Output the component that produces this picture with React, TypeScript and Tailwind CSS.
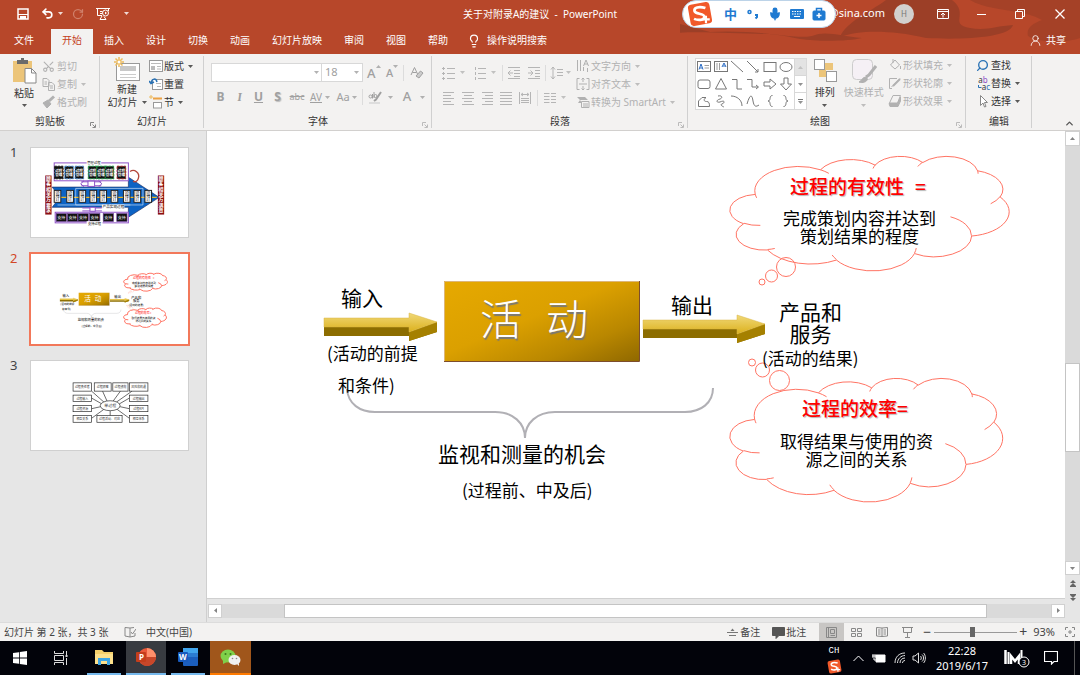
import type { ReactNode } from 'react';
import { Undo2, RotateCw, Scissors, Lightbulb, Search, ChevronUp, Mic, UserRound } from 'lucide-react';

type Arc = [number, number, number, number];

// Cloud outline, drawn on a 43200 x 43200 grid as elliptical arcs: [rx, ry, start, sweep]
const cloudOutline: Arc[] = [
  [6753, 9190, -11429249, 7426832],
  [5333, 7267, -8646143, 5396714],
  [4365, 5945, -8748475, 5983381],
  [4857, 6595, -7859164, 7034504],
  [5333, 7273, -4722533, 6541615],
  [6775, 9220, -2776035, 7816140],
  [5785, 7867, 37501, 6842000],
  [6752, 9215, 1347096, 6910353],
  [7720, 10543, 3974558, 4542661],
  [4360, 5918, -16496525, 8804134],
  [4345, 5945, -14809710, 9151131],
];

const cloudDetails: { from: [number, number]; arc: Arc }[] = [
  { from: [4693, 26177], arc: [4345, 5945, 5204520, 1585770] },
  { from: [6928, 34899], arc: [4360, 5918, 4416628, 686848] },
  { from: [16478, 39090], arc: [6752, 9215, 8257449, 844866] },
  { from: [28827, 34751], arc: [6752, 9215, 387196, 959901] },
  { from: [34129, 22954], arc: [5785, 7867, -4217541, 4255042] },
  { from: [41798, 15354], arc: [5333, 7273, 1819082, 1665090] },
  { from: [38324, 5426], arc: [4857, 6595, -824660, 891534] },
  { from: [29078, 3952], arc: [4857, 6595, -8950887, 1091722] },
  { from: [22141, 4720], arc: [4365, 5945, -9809656, 1061181] },
  { from: [14000, 5192], arc: [6753, 9190, -4002417, 739161] },
  { from: [4127, 15789], arc: [6753, 9190, 9459261, 711490] },
];

function arcPath(from: [number, number], arcs: Arc[]) {
  let [x, y] = from;
  let d = `M${x} ${y}`;
  arcs.forEach(([rx, ry, start, sweep]) => {
    const param = (units: number) => {
      const a = (units / 60000) * (Math.PI / 180);
      return Math.atan2(rx * Math.sin(a), ry * Math.cos(a));
    };
    const t0 = param(start);
    const t1 = param(start + sweep);
    const cx = x - rx * Math.cos(t0);
    const cy = y - ry * Math.sin(t0);
    x = cx + rx * Math.cos(t1);
    y = cy + ry * Math.sin(t1);
    d += ` A${rx} ${ry} 0 ${sweep > 10800000 ? 1 : 0} 1 ${Math.round(x)} ${Math.round(y)}`;
  });
  return d;
}

const cloudPath = [
  arcPath([3900, 14370], cloudOutline) + 'Z',
  ...cloudDetails.map((item) => arcPath(item.from, [item.arc])),
].join(' ');

type Label = { lines: string[]; x: number; y: number; size: number; leading: number; kind?: 'title' | 'box' };

const slideLabels: Label[] = [
  { lines: ['输入'], x: 134, y: 156, size: 21, leading: 21 },
  { lines: ['(活动的前提'], x: 120, y: 213, size: 17, leading: 17 },
  { lines: ['和条件)'], x: 131, y: 245, size: 17, leading: 17 },
  { lines: ['活'], x: 273, y: 165, size: 42, leading: 42, kind: 'box' },
  { lines: ['动'], x: 339, y: 165, size: 42, leading: 42, kind: 'box' },
  { lines: ['输出'], x: 464, y: 163, size: 21, leading: 21 },
  { lines: ['产品和', '服务'], x: 572, y: 169, size: 21, leading: 22 },
  { lines: ['(活动的结果)'], x: 555, y: 218, size: 17, leading: 17 },
  { lines: ['监视和测量的机会'], x: 231, y: 312, size: 21, leading: 21 },
  { lines: ['(过程前、中及后)'], x: 255, y: 350, size: 17, leading: 17 },
  { lines: ['过程的有效性'], x: 583, y: 45, size: 19, leading: 19, kind: 'title' },
  { lines: ['='], x: 708, y: 45, size: 19, leading: 19, kind: 'title' },
  { lines: ['完成策划内容并达到', '策划结果的程度'], x: 576, y: 78, size: 17, leading: 18 },
  { lines: ['过程的效率='], x: 595, y: 267, size: 19, leading: 19, kind: 'title' },
  { lines: ['取得结果与使用的资', '源之间的关系'], x: 573, y: 301, size: 17, leading: 18 },
];

const labelStyles = {
  plain: 'text-black',
  title: 'font-medium text-[#ff0000] [text-shadow:1px_1px_1px_#b5b5b5]',
  box: 'font-light text-white [text-shadow:1px_2px_1px_#777]',
};

function BlockArrow({ x, y, shaft }: { x: number; y: number; shaft: number }) {
  return (
    <g transform={`translate(${x} ${y})`}>
      <path d={`M0 14H${shaft}V19L${shaft + 28} 9V19L${shaft} 28V23H0Z`} fill="#8c6d00" />
      <path d={`M${shaft} 19L${shaft + 28} 9V19L${shaft} 28Z`} fill="#a58000" />
      <path d={`M0 5H${shaft}V0L${shaft + 28} 9L${shaft} 19V14H0Z`} fill="url(#gold)" stroke="#d8b545" strokeWidth="0.5" />
    </g>
  );
}

function SlideShapes() {
  return (
    <>
      <defs>
        <linearGradient id="gold" x1="0" y1="0" x2="0" y2="1">
          <stop offset="0" stopColor="#f0d878" />
          <stop offset="1" stopColor="#dcb11c" />
        </linearGradient>
        <linearGradient id="box" x1="0" y1="0" x2="1" y2="1">
          <stop offset="0" stopColor="#e6a900" />
          <stop offset="0.45" stopColor="#dba000" />
          <stop offset="0.75" stopColor="#b98700" />
          <stop offset="1" stopColor="#8f6800" />
        </linearGradient>
      </defs>
      <rect x="237" y="150" width="195" height="81" fill="url(#box)" />
      <path d="M237.500 231V150.500H432" fill="none" stroke="#dcb678" />
      <path d="M237 230.500H432.500V150" fill="none" stroke="#7d4d2c" />
      <BlockArrow x={117} y={182} shaft={85} />
      <BlockArrow x={436} y={184} shaft={94} />
      <path
        d="M140 258C141 273 153 281 168 281H288C306 281 318 292 318 307C318 292 330 281 348 281H478C494 281 506 272 506 257"
        fill="none"
        stroke="#b1b0b5"
        strokeWidth="2"
      />
      <g fill="none" stroke="#ff7464">
        <path d={cloudPath} transform="translate(523 25) scale(0.00646 0.00265)" vectorEffect="non-scaling-stroke" />
        <circle cx="579" cy="136" r="9.500" />
        <circle cx="564.500" cy="145" r="6" />
        <circle cx="555" cy="151" r="3" />
        <path d={cloudPath} transform="translate(523 247) scale(0.00631 0.00286)" vectorEffect="non-scaling-stroke" />
        <circle cx="572.500" cy="249.500" r="10" />
        <circle cx="555.500" cy="239" r="7" />
        <circle cx="545" cy="231.500" r="3.500" />
      </g>
    </>
  );
}

// First thumbnail: process map
function ProcessMapThumb() {
  const top = [71, 102, 133, 173, 199, 224, 260];
  const topStroke = ['#222', '#4d8fd6', '#4d8fd6', '#1d9a48', '#1d9a48', '#1d9a48', '#a32020'];
  const middle = [70, 108, 145, 178, 208, 242, 279, 311, 344];
  const bottom = [76, 110, 142, 177, 218, 259];
  return (
    <svg viewBox="0 0 474 270" className="block w-full" fontFamily="Noto Sans CJK SC">
      <path d="M64 118H294V88L387 149L294 209V179H64L87 149Z" fill="#0c63c4" stroke="#1c2f66" strokeWidth="2" />
      <rect x="70" y="45" width="224" height="54" fill="#fff" stroke="#8d50c6" strokeWidth="3" />
      <rect x="73" y="194" width="221" height="32" fill="#fff" stroke="#8d50c6" strokeWidth="3" />
      {top.map((x, i) => (
        <g key={x}>
          <rect x={x} y="55" width="26" height="38" fill="#111" stroke={topStroke[i]} strokeWidth="3" strokeDasharray="7 3" />
          <text x={x + 2} y="71" fontSize="11" fontWeight="700" fill="#fff">过程</text>
          <text x={x + 2} y="86" fontSize="11" fontWeight="700" fill="#fff">管理</text>
        </g>
      ))}
      {bottom.map((x) => (
        <g key={x}>
          <rect x={x} y="198" width="31" height="24" fill="#111" stroke="#6b3d99" strokeWidth="2" />
          <text x={x + 3} y="215" fontSize="12" fill="#fff">支持</text>
        </g>
      ))}
      <path d="M82 149H380" stroke="#e5b62b" strokeWidth="4" />
      <path d="M135 122V172H338V122ZM80 172H300" fill="none" stroke="#cfe2f7" strokeWidth="2" />
      {middle.map((x) => (
        <g key={x}>
          <rect x={x} y="128" width="20" height="36" fill="#fff" stroke="#222" strokeWidth="3" />
          <text x={x + 3} y="143" fontSize="14">设</text>
          <text x={x + 3} y="158" fontSize="14">计</text>
        </g>
      ))}
      <g fill="none" stroke="#8d50c6" strokeWidth="3">
        <path d="M152 102H212M152 114H212M160 99L150 108L160 117M204 99L214 108L204 117M155 181H214M155 190H214" />
        <rect x="172" y="100" width="20" height="16" fill="#fff" />
        <rect x="178" y="179" width="16" height="12" fill="#fff" />
      </g>
      <path d="M299 71C312 62 330 75 324 92C322 99 316 104 308 101" fill="none" stroke="#b3473b" strokeWidth="4" />
      <rect x="168" y="38" width="44" height="13" fill="#fff" />
      <text x="170" y="49" fontSize="10">管理过程</text>
      <rect x="214" y="171" width="68" height="14" fill="#fff" />
      <text x="216" y="182" fontSize="11">产品实现过程</text>
      <rect x="168" y="221" width="48" height="13" fill="#fff" />
      <text x="172" y="232" fontSize="10">支持过程</text>
      {[43, 383].map((x) => (
        <g key={x}>
          <rect x={x} y="83" width="19" height="118" fill="#8d0f12" />
          {(x === 43 ? '顾客相关方要求' : '顾客相关方满意').split('').map((char, i) => (
            <text key={i} x={x + 2} y={97 + i * 16} fontSize="15" fontWeight="700" fill="#fff">{char}</text>
          ))}
        </g>
      ))}
    </svg>
  );
}

function ActivityThumb() {
  return (
    <svg viewBox="-67 -97 1000 570" className="block w-full" fontFamily="Noto Sans CJK SC">
      <SlideShapes />
      {slideLabels.map((label) => {
        const width = label.lines[0].length * label.size;
        return label.lines.map((line, i) => (
          <text
            key={line + label.x}
            x={label.x + (i ? (width - line.length * label.size) / 2 : 0)}
            y={label.y + label.leading * i + label.size * 0.94}
            fontSize={label.size}
            fill={label.kind === 'title' ? '#ff0000' : label.kind === 'box' ? '#fff' : '#000'}
          >
            {line}
          </text>
        ));
      })}
    </svg>
  );
}

const mapBoxes = [
  { x: 127, y: 66, w: 56, h: 25, text: '过程责任者' },
  { x: 191, y: 66, w: 51, h: 25, text: '过程顾客' },
  { x: 247, y: 66, w: 46, h: 25, text: '过程绩效' },
  { x: 297, y: 66, w: 56, h: 25, text: '风险和机遇' },
  { x: 127, y: 103, w: 56, h: 19, text: '过程输入' },
  { x: 127, y: 134, w: 56, h: 19, text: '过程资源' },
  { x: 127, y: 165, w: 56, h: 20, text: '相互关系' },
  { x: 297, y: 103, w: 56, h: 19, text: '过程输出' },
  { x: 297, y: 134, w: 56, h: 19, text: '过程KPI' },
  { x: 297, y: 165, w: 56, h: 20, text: '相互体系' },
  { x: 199, y: 165, w: 76, h: 20, text: '过程活动、对应' },
];

function MindMapThumb() {
  return (
    <svg viewBox="0 0 474 270" className="block w-full" fontFamily="Noto Sans CJK SC">
      <g fill="none" stroke="#222" strokeWidth="2">
        <path d="M183 91L220 124M216 91L230 122M270 91L248 121M305 91L258 124M183 112L213 129M183 144L210 138M183 173L220 146M297 112L266 130M297 144L269 138M297 173L260 146M239 150V165" />
        <ellipse cx="239" cy="135" rx="30" ry="15" fill="#fff" />
        {mapBoxes.map((box) => (
          <rect key={box.text} x={box.x} y={box.y} width={box.w} height={box.h} fill="#fff" />
        ))}
      </g>
      <g textAnchor="middle" fontSize="9" fill="#333">
        {mapBoxes.map((box) => (
          <text key={box.text} x={box.x + box.w / 2} y={box.y + box.h / 2 + 4}>{box.text}</text>
        ))}
        <text x="239" y="139" fontSize="12">单过程</text>
      </g>
    </svg>
  );
}

function Caret({ className = '' }: { className?: string }) {
  return (
    <svg viewBox="0 0 5 3" className={`h-[3px] w-[5px] shrink-0 fill-current opacity-80 ${className}`}>
      <path d="M0 0H5L2.500 3Z" />
    </svg>
  );
}

function Icon({ children, className = 'size-[14px]', box = 14 }: { children: ReactNode; className?: string; box?: number }) {
  return (
    <svg viewBox={`0 0 ${box} ${box}`} className={`shrink-0 ${className}`} fill="none" stroke="currentColor">
      {children}
    </svg>
  );
}

function Group({ label, className, launcher = '', children }: { label: string; className: string; launcher?: string; children: ReactNode }) {
  return (
    <section aria-label={label} className={`relative flex shrink-0 flex-col ${className}`}>
      <div className="flex h-[60px]">{children}</div>
      <div className="text-center leading-[17px]">{label}</div>
      {launcher && (
        <button aria-label={`${label}设置`} className={`absolute right-1 bottom-[2px] ${launcher}`}>
          <Icon className="size-[6px]" box={6}><path d="M0.500 4V0.500H4M2.500 2.500L5 5M5.500 2.500V5.500H2.500" /></Icon>
        </button>
      )}
      <div className="absolute top-[2px] right-0 h-[72px] w-px bg-[#d0d0d0]" />
    </section>
  );
}

function RowButton({ icon, text, caret, className = '' }: { icon: ReactNode; text: string; caret?: boolean; className?: string }) {
  return (
    <button className={`flex h-[18px] items-center whitespace-nowrap ${className}`}>
      {icon}
      <span className="ml-px">{text}</span>
      {caret && <Caret className="ml-1" />}
    </button>
  );
}

const Divider = () => <div className="h-4 w-px shrink-0 bg-[#dcdcdc]" />;

function SogouMark({ className }: { className: string }) {
  return (
    <svg viewBox="0 0 24 24" className={className}>
      <rect x="2" y="2" width="20" height="20" rx="3" fill="#f1592a" transform="rotate(-10 12 12)" />
      <path d="M17 6.500C11 4.500 6 6 7 9.500C8 12.500 16 11 16 14.500C16 18 10 18 6.500 16.500" fill="none" stroke="#fff" strokeWidth="2.500" />
      <path d="M14 17H21M17.500 13.500V20.500" stroke="#fff" strokeWidth="2" />
    </svg>
  );
}

function TitleBar() {
  return (
    <div className="relative flex h-[27px] items-center">
      <div className="flex items-center pl-[17px]">
        <button aria-label="保存" className="w-[24px]">
          <Icon className="size-3" box={12}>
            <path d="M1 1H11V11H1Z" strokeWidth="1.500" /><path d="M1 6.500H11" /><path d="M3 8H9V11H3Z" fill="currentColor" stroke="none" />
          </Icon>
        </button>
        <button aria-label="撤消" className="flex w-[31px] items-center gap-1">
          <Undo2 className="size-[13px]" strokeWidth={3} /><Caret />
        </button>
        <button aria-label="恢复" className="w-[24px] text-[#d0806b]"><RotateCw className="size-[12px]" strokeWidth={2.5} /></button>
        <button aria-label="从头开始放映" className="w-[28px]">
          <Icon>
            <path d="M0 1.500H14M1.500 2V8.500H6M4 4.500H6.500M4 6.500H6M12.500 2V4M6 9L4 12.500H10L8 9.500" /><circle cx="9.500" cy="6" r="3" /><path d="M9 4.500L11 6L9 7.500Z" fill="currentColor" stroke="none" />
          </Icon>
        </button>
        <button aria-label="自定义快速访问工具栏"><Caret /></button>
      </div>
      <h1 className="absolute inset-x-0 text-center text-[10px] leading-4 whitespace-pre">关于对附录A的建议  -  PowerPoint</h1>
      <div className="relative ml-auto flex items-center">
        <span className="text-[11px]">@sina.com</span>
        <span className="ml-[9px] flex size-[20px] items-center justify-center rounded-full bg-[#d2d0ce] text-[8px] text-[#777]">H</span>
        <button aria-label="功能区显示选项" className="ml-[23px]">
          <Icon className="size-3" box={12}><path d="M0.500 1.500H11.500V10.500H0.500ZM0.500 3.500H11.500M6 9.500V5M4 7L6 5L8 7" /></Icon>
        </button>
        <button aria-label="最小化" className="ml-[28px]"><Icon className="size-[10px]" box={10}><path d="M0 5.500H9" /></Icon></button>
        <button aria-label="还原" className="ml-[28px]"><Icon className="size-[10px]" box={10}><path d="M0.500 2.500H7.500V9.500H0.500ZM2.500 2.500V0.500H9.500V7.500H7.500" /></Icon></button>
        <button aria-label="关闭" className="mr-[15px] ml-[30px]"><Icon className="size-[10px]" box={10}><path d="M0.500 0.500L9.500 9.500M9.500 0.500L0.500 9.500" strokeWidth="1.300" /></Icon></button>
      </div>
      {/* Floating input method bar */}
      <div className="absolute top-0 right-[244px] flex h-[28px] w-[154px] items-center rounded-[14px] border border-[#bcd3e8] bg-white pl-1 text-[#1f7ad1]">
        <SogouMark className="size-[26px]" />
        <button className="ml-[11px] text-[13px] leading-4 font-bold">中</button>
        <button aria-label="标点" className="ml-[9px]">
          <Icon><circle cx="3.500" cy="5" r="1.500" strokeWidth="1.500" /><path d="M9 8H11V10L9.500 11.500" strokeWidth="2" /></Icon>
        </button>
        <Mic className="ml-[8px] size-[14px] fill-current" strokeWidth={2.5} />
        <Icon className="ml-[8px] size-[14px]">
          <rect x="0" y="2" width="14" height="10" rx="1" fill="currentColor" stroke="none" /><path d="M2 4.500H12M2 7H12" stroke="#fff" strokeDasharray="1.500 1" /><path d="M4 9.500H10" stroke="#fff" />
        </Icon>
        <Icon className="ml-[8px] size-[14px]">
          <rect x="1" y="4" width="12" height="9" rx="1" fill="currentColor" /><path d="M4.500 4V1.500H9.500V4" strokeWidth="1.500" /><path d="M7 6V11M4.500 8.500H9.500" stroke="#fff" strokeWidth="1.500" />
        </Icon>
      </div>
    </div>
  );
}

function TabBar() {
  return (
    <nav className="relative flex h-[27px] text-[10px]">
      <button className="pr-[17px] pl-[14px]">文件</button>
      <button className="mt-[2px] bg-[#f3f2f1] px-[11px] pb-[2px] text-[#c43e1c]">开始</button>
      {['插入', '设计', '切换', '动画', '幻灯片放映', '审阅', '视图', '帮助'].map((tab) => (
        <button key={tab} className="px-[11px]">{tab}</button>
      ))}
      <button className="flex items-center gap-[6px] pl-2">
        <Lightbulb className="size-[14px]" strokeWidth={2} />操作说明搜索
      </button>
      <button className="mr-[14px] ml-auto flex items-center gap-1">
        <UserRound className="size-[13px]" strokeWidth={1.5} />共享
      </button>
    </nav>
  );
}

function ShapeGallery() {
  const cells = [
    <><rect x="0.500" y="1.500" width="13" height="10" /><path d="M2 9.500L4 4L6 9.500M3 8H5.500" stroke="#2b6cc4" /><path d="M7.500 5.500H12M7.500 8H12" strokeWidth="0.700" /></>,
    <><rect x="0.500" y="1.500" width="13" height="10" /><path d="M8 7L10 3L12 7M9 6H11.500" stroke="#2b6cc4" /><path d="M3 3V10M5.500 3V10" strokeWidth="0.700" /></>,
    <path d="M1 1L13 12" />,
    <path d="M1 1L12 12M12 9V12H9" />,
    <rect x="1" y="2.500" width="12" height="9" />,
    <ellipse cx="7" cy="7" rx="6" ry="4.500" />,
    <rect x="1" y="3" width="12" height="8.500" rx="2" />,
    <path d="M7 1.500L12.500 12H1.500Z" />,
    <path d="M2 2.500H7V12H12" />,
    <path d="M1 2.500H6V10H12M10 8L12.500 10L10 12" />,
    <path d="M1 5H7V2L13 7L7 12V9H1Z" />,
    <path d="M5 1H9V7H12.500L7 13L1.500 7H5Z" />,
    <path d="M1.500 12.500V7L5 3.500H9C6 5.500 7 7.500 9.500 7.500C12 7.500 12.500 9 12.500 12.500Z" />,
    <path d="M4 2C8 1 9 4 6 5C2 6 2 9 6 8C10 6 12 8 8 10C5 11 10 13 10 13" />,
    <path d="M1 2C7 2 12 6 12 12" />,
    <path d="M1 10C4 0 6 0 7 7C8 13 10 13 13 11" />,
    <path d="M9.500 1.500C5.500 1.500 8.500 7 5 7C8.500 7 5.500 12.500 9.500 12.500" />,
    <path d="M4.500 1.500C8.500 1.500 5.500 7 9 7C5.500 7 8.500 12.500 4.500 12.500" />,
  ];
  return (
    <div className="mt-1 ml-[7px] flex h-[52px] w-[116px] border border-[#d8d8d8] bg-white text-[#777]">
      <div className="grid flex-1 grid-cols-6 place-items-center">
        {cells.map((cell, i) => (
          <Icon key={i} className="size-[14px]">{cell}</Icon>
        ))}
      </div>
      <div className="flex w-[12px] flex-col border-l border-[#d8d8d8]">
        <button aria-label="上一行" className="flex flex-1 items-center justify-center bg-[#e3e3e3] text-[#bbb]"><Caret className="rotate-180" /></button>
        <button aria-label="下一行" className="flex flex-1 items-center justify-center border-y border-[#d8d8d8]"><Caret /></button>
        <button aria-label="其他" className="flex flex-1 flex-col items-center justify-center gap-px"><span className="h-px w-[5px] bg-current" /><Caret /></button>
      </div>
    </div>
  );
}

function Lines({ d, label, width }: { d: string; label: string; width: string }) {
  return (
    <button aria-label={label} className={`flex justify-center ${width}`}>
      <Icon><path d={d} /></Icon>
    </button>
  );
}

function Ribbon() {
  return (
    <div className="relative flex h-[77px] border-b border-[#d2d0ce] bg-[#f3f2f1] text-[10px] text-[#333]">
      <Group label="剪贴板" className="w-[100px]" launcher="text-[#888]">
        <button className="ml-[10px] flex w-[28px] flex-col items-center pt-1">
          <Icon className="size-[27px]" box={27}>
            <rect x="2" y="3" width="19" height="21" fill="#ecc57a" stroke="none" /><path d="M6 2H10V0H13V2H17V6H6Z" fill="#6b6b6b" stroke="none" /><path d="M14 10.500H20.500L25 15V25H14Z" fill="#fff" stroke="#888" /><path d="M20.500 10.500V15H25" stroke="#888" />
          </Icon>
          <span className="leading-4">粘贴</span>
          <Caret className="mt-[3px]" />
        </button>
        <div className="ml-1 pt-[3px] text-[#b1b1b1]">
          <RowButton icon={<Scissors className="mr-px size-[13px] -rotate-90" />} text="剪切" />
          <RowButton caret icon={<Icon><path d="M1 1.500H5L7 3.500V9.500H1ZM6.500 5.500H10L12.500 8V13.500H6.500ZM8 9H11M8 11H11M2.500 5H5M2.500 7H5" /></Icon>} text="复制" />
          <RowButton icon={<Icon><path d="M1 8L6 5L9 9L5 13Z" fill="currentColor" /><path d="M7 6L12 1.500" strokeWidth="3" /></Icon>} text="格式刷" />
        </div>
      </Group>
      <Group label="幻灯片" className="w-[104px]">
        <button className="ml-2 flex w-[38px] flex-col items-center pt-[3px] whitespace-nowrap">
          <Icon className="size-[26px]" box={26}>
            <rect x="2.500" y="6.500" width="23" height="17" fill="#fff" stroke="#999" /><rect x="6" y="9" width="16" height="5" fill="#c8c8c8" stroke="none" /><path d="M6 17.500H22M6 20.500H22" stroke="#ccc" /><path d="M5 0V10M0 5H10M1.500 1.500L8.500 8.500M8.500 1.500L1.500 8.500" stroke="#edbb5c" strokeWidth="1.500" /><circle cx="5" cy="5" r="1.500" fill="#fff" stroke="none" />
          </Icon>
          <span className="leading-[13px]">新建</span>
          <span className="flex items-center gap-1 leading-[13px]">幻灯片 <Caret /></span>
        </button>
        <div className="ml-[3px] pt-[3px]">
          <RowButton caret icon={<Icon><rect x="0.500" y="1.500" width="13" height="11" fill="#fff" stroke="#999" /><path d="M2 4.500H12M8 7.500H12M8 10H12" stroke="#bbb" /><rect x="2" y="7" width="4" height="4" fill="#bbb" stroke="none" /></Icon>} text="版式" />
          <RowButton icon={<Icon><rect x="3.500" y="2.500" width="10" height="10" fill="#fff" stroke="#999" /><path d="M7 6.500H12M8 9.500H12" stroke="#bbb" /><path d="M8 5C7 1 3 1 2 6M0 4L2 6.500L5 5" stroke="#2a72b5" strokeWidth="1.500" /></Icon>} text="重置" />
          <RowButton caret icon={<Icon><path d="M4 3.500H13" stroke="#eba143" strokeWidth="2" /><path d="M0 2H4M2 0V4" stroke="#edbb5c" /><rect x="4.500" y="7.500" width="8" height="5.500" fill="#fff" stroke="#999" /></Icon>} text="节" />
        </div>
      </Group>
      <Group label="字体" className="w-[228px] text-[#333]" launcher="text-[#bbb]">
        <div className="pl-[7px] text-[#a0a0a0]">
          <div className="mt-[9px] flex items-center">
            <label className="flex h-[19px] w-[111px] items-center border border-[#d8d8d8] bg-white pr-[2px]">
              <select aria-label="字体" className="w-full appearance-none" /><Caret />
            </label>
            <label className="flex h-[19px] w-[41px] items-center border border-l-0 border-[#d8d8d8] bg-white px-[3px]">
              <select aria-label="字号" className="w-full appearance-none text-[11px]"><option>18</option></select><Caret />
            </label>
            <button aria-label="增大字号" className="ml-1 flex w-[14px] text-[13px] leading-4 font-medium">A<Caret className="rotate-180" /></button>
            <button aria-label="减小字号" className="ml-[5px] flex w-[14px] pt-px text-[11px] leading-4 font-medium">A<Caret /></button>
            <div className="ml-[3px]"><Divider /></div>
            <button aria-label="清除格式" className="ml-[6px]"><Icon><path d="M1 9L4.500 1.500L8 9M2.500 6.500H6.500" /><path d="M6 10L10.500 5L13 7L9 12Z" fill="#ccc" /></Icon></button>
          </div>
          <div className="mt-[5px] flex h-5 items-center text-[12px] font-bold">
            <button className="w-[19px]">B</button>
            <button className="w-[19px] font-serif italic">I</button>
            <button className="w-[19px] underline">U</button>
            <button className="w-[19px] [text-shadow:1px_1px_1px_#bbb]">S</button>
            <button className="w-[20px] text-[9px] font-normal line-through">abc</button>
            <button className="w-[18px] text-[10px] font-normal underline">AV</button><Caret />
            <button className="ml-[4px] w-[18px] text-[11px] font-normal">Aa</button><Caret />
            <div className="ml-[5px]"><Divider /></div>
            <button aria-label="文本突出显示颜色" className="ml-[5px] mr-[6px]"><Icon><path d="M1 6.500A1.500 1.500 0 1 0 4 6.500A1.500 1.500 0 1 0 1 6.500M4.500 4V8.500M6 2V8M6 6A1.500 1.500 0 1 0 9 6A1.500 1.500 0 1 0 6 6" /><path d="M13 2L8 9.500L6 11" strokeWidth="2" /><path d="M1 13H12" stroke="#ddd" strokeWidth="2" /></Icon></button><Caret />
            <button aria-label="字体颜色" className="ml-[5px] w-[18px] text-[13px] font-medium">A</button><Caret className="ml-[4px]" />
          </div>
        </div>
      </Group>
      <Group label="段落" className="w-[256px]" launcher="text-[#bbb]">
        <div className="pl-[7px] text-[#b5b5b5]">
          <div className="mt-[9px] flex h-[19px] items-center">
            <Lines label="项目符号" width="w-[19px]" d="M0 2.500H3M0 7.500H3M0 12.500H3M1.500 1V4M1.500 6V9M1.500 11V14M5 2.500H13M5 7.500H13M5 12.500H13" /><Caret className="ml-[2px]" />
            <div className="w-[5px]" />
            <Lines label="编号" width="w-[19px]" d="M2.500 1V4M2.500 6V9M2.500 11V14M5 2.500H13M5 7.500H13M5 12.500H13" /><Caret className="ml-[2px]" />
            <div className="ml-[6px]"><Divider /></div>
            <Lines label="减少缩进量" width="ml-[1px] w-[20px]" d="M1 1.500H13M7 4.500H13M7 7.500H13M7 10.500H13M1 12.500H13M6 7H1M3.500 4.500L1 7L3.500 9.500" />
            <Lines label="增加缩进量" width="w-[20px]" d="M1 1.500H13M8 4.500H13M8 7.500H13M8 10.500H13M1 12.500H13M1 7H6M3.500 4.500L6 7L3.500 9.500" />
            <div className="ml-px"><Divider /></div>
            <Lines label="行距" width="ml-[2px] w-[18px]" d="M3 1V13M1 3.500L3 1L5 3.500M1 10.500L3 13L5 10.500M7 3.500H13M7 6.500H13M7 9.500H13" /><Caret />
          </div>
          <div className="mt-[6px] flex h-[19px] items-center">
            <Lines label="左对齐" width="w-[19px]" d="M1 1.500H12M1 4.500H9M1 7.500H12M1 10.500H9M1 13.500H12" />
            <Lines label="居中" width="w-[19px]" d="M1 1.500H13M3 4.500H11M1 7.500H13M3 10.500H11M1 13.500H13" />
            <Lines label="右对齐" width="w-[19px]" d="M2 1.500H13M5 4.500H13M2 7.500H13M5 10.500H13M2 13.500H13" />
            <Lines label="两端对齐" width="w-[19px]" d="M1 1.500H13M1 4.500H13M1 7.500H13M1 10.500H13M1 13.500H13" />
            <Lines label="分散对齐" width="w-[20px]" d="M1.500 1V13M12.500 1V13M3 3.500H11M5 2L3 3.500L5 5M9 2L11 3.500L9 5M3 7.500H11M3 9.500H11M3 11.500H11" />
            <div className="ml-[2px]"><Divider /></div>
            <Lines label="分栏" width="ml-[2px] w-[19px]" d="M1 2.500H6.500M8 2.500H13M1 5.500H6.500M8 5.500H13M1 8.500H6.500M8 8.500H13M1 11.500H6.500M8 11.500H13" /><Caret className="ml-[2px]" />
          </div>
        </div>
        <div className="ml-[5px] pt-[3px] text-[#b1b1b1]">
          <RowButton caret icon={<Icon><path d="M1.500 1V12M4.500 1V12M7.500 8V12M11.500 9V13M7.500 7L10 1L12.500 7M8 5H12" /></Icon>} text="文字方向" />
          <RowButton caret icon={<Icon><path d="M3.500 1.500H1V12.500H3.500M10.500 1.500H13V12.500H10.500M3 7H11M7 1V5M5.500 2.500L7 1L8.500 2.500M7 9V13M5.500 11.500L7 13L8.500 11.500" /></Icon>} text="对齐文本" />
          <RowButton caret icon={<Icon><path d="M1 2H9L12 5H4L6 8H2L4 5Z" fill="currentColor" stroke="none" /><path d="M5.500 6.500H13V12.500H5.500ZM7 9H12M7 11H12" fill="#f3f2f1" /></Icon>} text="转换为 SmartArt" />
        </div>
      </Group>
      <Group label="绘图" className="w-[278px] pr-[14px]" launcher="text-[#bbb]">
        <ShapeGallery />
        <button className="ml-1 flex w-[28px] flex-col items-center pt-1">
          <Icon className="size-[26px]" box={26}>
            <path d="M13 5H21V12H13Z M7 12H14V19H7Z" fill="#ecc57a" stroke="none" /><rect x="2.500" y="1.500" width="10" height="10" fill="#fff" stroke="#999" /><rect x="14.500" y="13.500" width="10" height="10" fill="#fff" stroke="#999" />
          </Icon>
          <span className="leading-4">排列</span>
          <Caret className="mt-1" />
        </button>
        <button className="ml-[5px] flex w-[42px] flex-col items-center pt-1 whitespace-nowrap text-[#b1b1b1]">
          <Icon className="size-[26px]" box={26}>
            <rect x="1.500" y="1.500" width="20" height="20" rx="4" fill="#f5f0f5" stroke="#ccc" /><path d="M25 8L18 17L15 19" strokeWidth="3" /><path d="M8 24C11 23 11 19 15 19C19 22 13 26 8 24Z" fill="currentColor" />
          </Icon>
          <span className="leading-4">快速样式</span>
          <Caret className="mt-1" />
        </button>
        <div className="ml-1 pt-[2px] text-[#b1b1b1]">
          <RowButton caret icon={<Icon><path d="M2.500 7L7 2L11.500 7L7 11ZM5 1V5M12.500 8V11" /></Icon>} text="形状填充" />
          <RowButton caret icon={<Icon><path d="M9 2.500H1.500V12.500H4M3.500 11L12 2.500" /><path d="M5 10L12 3" strokeWidth="2" /></Icon>} text="形状轮廓" />
          <RowButton caret icon={<Icon><path d="M5 1.500H12.500L9.500 9H1.500Z" /><path d="M1 9.500H9.500L12.500 3V7L10 12.500H2Z" fill="currentColor" /></Icon>} text="形状效果" />
        </div>
      </Group>
      <Group label="编辑" className="w-[66px]">
        <div className="ml-[10px] pt-[2px]">
          <RowButton icon={<Search className="mr-px size-[13px] -scale-x-100 text-[#2a72b5]" strokeWidth={2.5} />} text="查找" />
          <RowButton
            caret
            icon={
              <span className="flex w-[14px] flex-col text-[8px] leading-[7px]">
                <span>a<span className="text-[#8d50c6]">b</span></span>
                <span className="flex items-center justify-end">
                  <Icon className="size-1 text-[#2a72b5]" box={4}><path d="M0.500 0V2.500H3.500" /></Icon>a<span className="text-[#2a72b5]">c</span>
                </span>
              </span>
            }
            text="替换"
          />
          <RowButton caret icon={<Icon><path d="M4.500 1.500V11.500L7 9L8.500 13L10 12.500L8.500 8.500H11.500Z" fill="#fff" stroke="#888" /></Icon>} text="选择" />
        </div>
      </Group>
      <button aria-label="折叠功能区" className="mt-auto mr-[5px] mb-[1px] ml-auto text-[#555]"><ChevronUp className="size-[11px]" strokeWidth={3} /></button>
    </div>
  );
}

const thumbs = [<ProcessMapThumb />, <ActivityThumb />, <MindMapThumb />];

function SlidePane() {
  return (
    <aside className="w-[207px] shrink-0 border-r border-[#cfcfcf] bg-[#e6e6e6] pt-[15px]">
      <ol className="flex flex-col gap-[13px]">
        {thumbs.map((thumb, i) => (
          <li key={i} className="flex">
            <span className={`w-[29px] pl-[10px] text-[13px] leading-3 ${i === 1 ? 'text-[#d24726]' : 'text-[#444]'}`}>{i + 1}</span>
            <button
              aria-label={`幻灯片 ${i + 1}`}
              className={`bg-white ${i === 1 ? 'w-[161px] border-2 border-[#f2785a]' : 'm-px w-[159px] border border-[#d0d0d0]'}`}
            >
              {thumb}
            </button>
          </li>
        ))}
      </ol>
    </aside>
  );
}

function Editor() {
  return (
    <main className="flex min-w-0 flex-1 bg-[#e6e6e6]">
      <div className="flex min-w-0 flex-1 flex-col">
        <div className="relative min-h-[467px] flex-1 overflow-hidden bg-white">
          <svg viewBox="0 0 820 400" className="absolute top-0 left-0 h-[400px] w-[820px]">
            <SlideShapes />
          </svg>
          {slideLabels.map((label) => (
            <p
              key={label.lines[0] + label.x}
              className={`absolute text-center font-[family-name:'Noto_Sans_CJK_SC',sans-serif] whitespace-pre ${labelStyles[label.kind ?? 'plain']}`}
              style={{ left: label.x, top: label.y, fontSize: label.size, lineHeight: `${label.leading}px` }}
            >
              {label.lines.join('\n')}
            </p>
          ))}
        </div>
        <div className="flex h-[24px] items-center border-t border-[#d0d0d0] text-[#666]">
          <button aria-label="向左滚动" className="ml-px flex h-[14px] w-[14px] items-center justify-center border border-[#d0d0d0] bg-white"><Caret className="rotate-90" /></button>
          <div className="flex h-[14px] flex-1 bg-[#dadada]">
            <div className="w-[62px]" />
            <div className="flex-1 border border-[#c4c4c4] bg-white" />
            <div className="w-[64px]" />
          </div>
          <button aria-label="向右滚动" className="flex h-[14px] w-[14px] items-center justify-center border border-[#d0d0d0] bg-white"><Caret className="-rotate-90" /></button>
        </div>
      </div>
      <div className="flex w-[15px] flex-col pb-[17px] text-[#666]">
        <button aria-label="向上滚动" className="flex h-[15px] items-center justify-center border border-[#d0d0d0] bg-white"><Caret className="rotate-180" /></button>
        <div className="flex flex-1 flex-col bg-[#dadada]">
          <div className="grow-[217]" />
          <div className="h-[89px] border border-[#c4c4c4] bg-white" />
          <div className="grow-[109]" />
        </div>
        <button aria-label="向下滚动" className="flex h-[14px] items-center justify-center border border-[#d0d0d0] bg-white"><Caret /></button>
        <button aria-label="上一张幻灯片" className="flex h-[15px] items-center justify-center">
          <Icon className="size-[8px]" box={8}><path d="M1 4L4 1L7 4ZM1 7L4 4L7 7Z" fill="currentColor" stroke="none" /><path d="M1 7.500H7" /></Icon>
        </button>
        <button aria-label="下一张幻灯片" className="flex h-[15px] items-center justify-center">
          <Icon className="size-[8px]" box={8}><path d="M1 1L4 4L7 1ZM1 4L4 7L7 4Z" fill="currentColor" stroke="none" /><path d="M1 0.500H7" /></Icon>
        </button>
      </div>
    </main>
  );
}

function StatusBar() {
  return (
    <footer className="flex h-[19px] items-center border-t border-[#dcdcdc] bg-[#f3f2f1] pl-1 text-[10px] text-[#444]">
      <span className="w-[120px] whitespace-nowrap">幻灯片 第 2 张，共 3 张</span>
      <Icon className="size-3 text-[#888]" box={12}><path d="M6 2L1 1.500V10L6 11L11 10V7M6 2V11M6 2L10 1.500M7 6L8.500 8L12 3" /></Icon>
      <span className="ml-[10px]">中文(中国)</span>
      <button className="ml-auto flex items-center gap-[2px]">
        <Icon className="size-[11px] text-[#777]" box={11}><path d="M0 5.500H11M2 8.500H9" /><path d="M3.500 4L5.500 1.500L7.500 4Z" fill="currentColor" stroke="none" /></Icon>备注
      </button>
      <button className="ml-3 flex items-center gap-px">
        <Icon className="size-[13px] text-[#555]" box={13}><path d="M0.500 1.500H12.500V9.500H7L4 12.500V9.500H0.500Z" fill="currentColor" /></Icon>批注
      </button>
      <button aria-label="普通视图" className="ml-[13px] flex h-[18px] w-[25px] items-center justify-center bg-[#c8c6c4] text-[#888]">
        <Icon className="size-[11px]" box={11}><path d="M0.500 0.500H10.500V10.500H0.500ZM2.500 0.500V10.500M4.500 2.500H8.500V6.500H4.500ZM4.500 8.500H9" /></Icon>
      </button>
      <button aria-label="幻灯片浏览" className="ml-[7px] text-[#888]"><Icon className="size-[11px]" box={11}><path d="M0.500 1.500H4.500V4.500H0.500ZM6.500 1.500H10.500V4.500H6.500ZM0.500 6.500H4.500V9.500H0.500ZM6.500 6.500H10.500V9.500H6.500Z" /></Icon></button>
      <button aria-label="阅读视图" className="ml-[14px] text-[#888]"><Icon className="size-[12px]" box={12}><path d="M6 2V11M6 2L0.500 1.500V10L6 10.500L11.500 10V1.500ZM2 4H4.500M2 6H4.500M2 8H4.500M7.500 4H10M7.500 6H10M7.500 8H10" /></Icon></button>
      <button aria-label="幻灯片放映" className="ml-[14px] text-[#888]"><Icon className="size-[11px]" box={11}><path d="M0 0.500H11M1.500 1V5.500H9.500V1M5.500 6V10M3 10.500H8" /></Icon></button>
      <button aria-label="缩小" className="ml-[10px] text-[14px] leading-4">−</button>
      <input
        type="range"
        aria-label="缩放"
        defaultValue={46}
        className="ml-[3px] h-3 w-[83px] appearance-none bg-[linear-gradient(#999,#999)] bg-[length:100%_1px] bg-center bg-no-repeat [&::-webkit-slider-thumb]:h-[10px] [&::-webkit-slider-thumb]:w-[5px] [&::-webkit-slider-thumb]:appearance-none [&::-webkit-slider-thumb]:bg-[#666]"
      />
      <button aria-label="放大" className="ml-[2px] text-[14px] leading-4">+</button>
      <span className="ml-[6px] text-[11px]">93%</span>
      <button aria-label="使幻灯片适应当前窗口" className="mr-[5px] ml-[10px] text-[#888]"><Icon className="size-[10px]" box={10}><path d="M0.500 3V0.500H3M7 0.500H9.500V3M9.500 7V9.500H7M3 9.500H0.500V7M3 5H7M5 3V7" /></Icon></button>
    </footer>
  );
}

function Taskbar() {
  return (
    <nav className="flex h-[34px] items-center bg-[#02030a] text-white">
      <button aria-label="开始" className="flex w-[40px] justify-center">
        <svg viewBox="0 0 14 14" className="size-[14px] fill-white"><path d="M0 2L6 1.200V6.600H0ZM6.800 1L14 0V6.600H6.800ZM0 7.400H6V12.800L0 12ZM6.800 7.400H14V14L6.800 13Z" /></svg>
      </button>
      <button aria-label="任务视图" className="flex w-[42px] justify-center text-[#ddd]">
        <Icon><path d="M0.500 0V2.500H9.500V0M0.500 4.500H9.500V9.500H0.500ZM0.500 14V11.500H9.500V14M12.500 0V4M12.500 7V14" /><path d="M12.500 4V6" strokeWidth="2" /></Icon>
      </button>
      <button aria-label="文件资源管理器" className="ml-[5px] flex h-full w-[34px] items-center justify-center border-b-2 border-[#76b9ed]">
        <svg viewBox="0 0 19 17" className="h-[17px] w-[19px]">
          <path d="M0 1H7L9 3H18V15H0Z" fill="#f5d06c" /><path d="M0 5H18V15H0Z" fill="#fde08c" /><path d="M3 9H15V16H12V12H6V16H3Z" fill="#3da5e6" />
        </svg>
      </button>
      <button aria-label="PowerPoint" className="ml-[5px] flex h-full w-[40px] items-center justify-center border-b-2 border-[#76b9ed] bg-[#383b41]">
        <svg viewBox="0 0 20 18" className="h-[18px] w-[20px]">
          <circle cx="11" cy="9" r="9" fill="#e9593a" /><path d="M11 0A9 9 0 0 1 20 9H11Z" fill="#ff8f6b" /><path d="M2 9H20A9 9 0 0 1 3 13Z" fill="#c8472a" />
          <rect x="0" y="4" width="10" height="10" rx="1" fill="#c43e1c" /><text x="3" y="12" fontSize="8" fontWeight="700" fontFamily="Noto Sans" fill="#fff">P</text>
        </svg>
      </button>
      <button aria-label="Word" className="ml-[5px] flex h-full w-[34px] items-center justify-center border-b-2 border-[#76b9ed]">
        <svg viewBox="0 0 20 18" className="h-[18px] w-[20px]">
          <rect x="5" width="15" height="18" rx="1" fill="#1b5ebe" /><path d="M5 0H20V5H5Z" fill="#41a5ee" /><path d="M5 5H20V9H5Z" fill="#2b7cd3" />
          <rect x="0" y="4" width="10" height="10" rx="1" fill="#185abd" /><text x="1" y="12" fontSize="8" fontWeight="700" fontFamily="Noto Sans" fill="#fff">W</text>
        </svg>
      </button>
      <button aria-label="微信" className="ml-[5px] flex h-full w-[41px] items-center justify-center border-b-2 border-[#ff7a00] bg-[#a0561b]">
        <svg viewBox="0 0 21 17" className="h-[17px] w-[21px]">
          <ellipse cx="8" cy="7" rx="7.500" ry="6.500" fill="#7fd04a" /><path d="M3 11V15L7 13Z" fill="#7fd04a" /><circle cx="5.500" cy="5" r="1" fill="#3b7a1c" /><circle cx="10.500" cy="5" r="1" fill="#3b7a1c" />
          <ellipse cx="14.500" cy="11" rx="6" ry="5" fill="#f0f0f0" /><path d="M17 15L19 17V14Z" fill="#f0f0f0" /><circle cx="12.500" cy="9.500" r="0.800" fill="#888" /><circle cx="16.500" cy="9.500" r="0.800" fill="#888" />
        </svg>
      </button>
      <div className="ml-auto flex w-[16px] flex-col items-center">
        <span className="font-[family-name:'Liberation_Mono',monospace] text-[9px] leading-4">CH</span>
        <SogouMark className="size-[15px]" />
      </div>
      <button aria-label="显示隐藏的图标" className="ml-[11px]"><Icon className="size-[11px]" box={11}><path d="M0.500 8L5.500 3L10.500 8" /></Icon></button>
      <Icon className="ml-[8px] size-[14px]"><path d="M4 4H13V11H4Z" fill="currentColor" /><path d="M0 5H4M1 3V7M3 3V7M2 7V9H4" /></Icon>
      <Icon className="ml-[8px] size-[12px] text-[#ddd]" box={12}><path d="M1 11C1 5 5 1 11 1M3.500 11C3.500 7 7 3.500 11 3.500M6 11C6 8 8 6 11 6M8.500 11C8.500 9.500 9.500 8.500 11 8.500" /></Icon>
      <Icon className="ml-[6px] size-[14px] text-[#ddd]"><path d="M1 5H3L6.500 2V12L3 9H1ZM8.500 5C9.500 6 9.500 8 8.500 9M10 3.500C12 5 12 9 10 10.500M11.500 2C14 4 14 10 11.500 12" /></Icon>
      <div className="ml-[8px] w-[56px] text-center text-[11px] leading-[15px]">
        <div>22:28</div>
        <div>2019/6/17</div>
      </div>
      <svg viewBox="0 0 26 20" className="ml-[14px] h-[20px] w-[26px]" fill="none" stroke="#fff">
        <path d="M1.500 2V16M7 16V8L11 13L15 8V16" strokeWidth="2.500" /><path d="M4.500 4V16M17.500 2V12" strokeWidth="2" /><circle cx="20" cy="14" r="5" fill="#02030a" />
        <text x="18" y="17" fontSize="7" fontFamily="Noto Sans" fill="#fff" stroke="none">3</text>
      </svg>
      <button aria-label="通知" className="ml-[14px]"><Icon><path d="M0.500 0.500H13.500V10.500H10L7.500 13V10.500H0.500Z" strokeWidth="1.200" /></Icon></button>
      <div className="mr-[5px] ml-[16px] h-full w-px bg-[#555]" />
    </nav>
  );
}

export default function App() {
  return (
    <div lang="zh-CN" className="flex min-h-screen flex-col font-[family-name:'Noto_Sans','Noto_Sans_CJK_SC',sans-serif]">
      <header>
        <div className="relative bg-[#b7472a] text-white">
          {/* Ink cloud pattern behind the window buttons */}
          <svg viewBox="0 0 400 54" className="absolute top-0 right-0 h-[54px] w-[400px] fill-[#9c3f27]">
            <path d="M0 24C0 28 -2 32 -4 33C20 31 60 34 90 34C110 36 120 38 132 36C145 30 160 36 182 38C170 41 140 42 120 39C100 34 60 30 30 32Z" />
            <path d="M160 37C166 22 190 12 206 0H272C290 14 268 24 290 28C306 31 316 26 333 25C330 38 280 40 246 38C210 30 180 30 160 37Z" />
            <path d="M290 0H400V38C390 42 360 44 348 36C346 28 352 24 362 20C340 8 310 12 290 0Z" fillOpacity="0.700" />
          </svg>
          <TitleBar />
          <TabBar />
        </div>
        <Ribbon />
      </header>
      <div className="flex flex-1">
        <SlidePane />
        <Editor />
      </div>
      <StatusBar />
      <Taskbar />
    </div>
  );
}
